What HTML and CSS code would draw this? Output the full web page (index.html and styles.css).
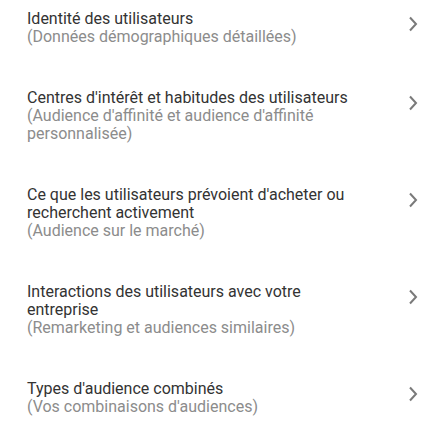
FILE: index.html
```html
<!DOCTYPE html>
<html lang="fr">
<head>
    <meta charset="UTF-8">
    <meta name="viewport" content="width=device-width, initial-scale=1.0">
    <title>Types d'audience</title>
    <link rel="stylesheet" href="styles.css">
</head>
<body>
    <ul class="audience-list">
        <li class="audience-item">
            <div class="audience-text">
                <span class="audience-title">Identité des utilisateurs</span>
                <span class="audience-sub">(Données démographiques détaillées)</span>
            </div>
            <svg class="chevron" width="10" height="16" viewBox="0 0 10 16"><polyline points="2,1.5 8,8 2,14.5"/></svg>
        </li>
        <li class="audience-item">
            <div class="audience-text">
                <span class="audience-title">Centres d'intérêt et habitudes des utilisateurs</span>
                <span class="audience-sub">(Audience d'affinité et audience d'affinité personnalisée)</span>
            </div>
            <svg class="chevron" width="10" height="16" viewBox="0 0 10 16"><polyline points="2,1.5 8,8 2,14.5"/></svg>
        </li>
        <li class="audience-item">
            <div class="audience-text">
                <span class="audience-title">Ce que les utilisateurs prévoient d'acheter ou recherchent activement</span>
                <span class="audience-sub">(Audience sur le marché)</span>
            </div>
            <svg class="chevron" width="10" height="16" viewBox="0 0 10 16"><polyline points="2,1.5 8,8 2,14.5"/></svg>
        </li>
        <li class="audience-item">
            <div class="audience-text">
                <span class="audience-title">Interactions des utilisateurs avec votre entreprise</span>
                <span class="audience-sub">(Remarketing et audiences similaires)</span>
            </div>
            <svg class="chevron" width="10" height="16" viewBox="0 0 10 16"><polyline points="2,1.5 8,8 2,14.5"/></svg>
        </li>
        <li class="audience-item">
            <div class="audience-text">
                <span class="audience-title">Types d'audience combinés</span>
                <span class="audience-sub">(Vos combinaisons d'audiences)</span>
            </div>
            <svg class="chevron" width="10" height="16" viewBox="0 0 10 16"><polyline points="2,1.5 8,8 2,14.5"/></svg>
        </li>
    </ul>
</body>
</html>
```

FILE: styles.css
```css
* {
    box-sizing: border-box;
    margin: 0;
    padding: 0;
}

body {
    font-family: Roboto, 'Liberation Sans', sans-serif;
    background-color: #fff;
    font-size: 16px;
    line-height: 18px;
}

.audience-list {
    list-style: none;
    display: flex;
    flex-direction: column;
    gap: 43px;
    padding: 10px 24px 0 27px;
}

.audience-item {
    display: flex;
    justify-content: space-between;
    align-items: flex-start;
}

.audience-text {
    display: flex;
    flex-direction: column;
    max-width: 338px;
}

.audience-title {
    color: #333;
}

.audience-sub {
    color: #8c8c8c;
}

.chevron {
    margin-top: 6px;
    fill: none;
    stroke: #7a7a7a;
    stroke-width: 2;
}
```
